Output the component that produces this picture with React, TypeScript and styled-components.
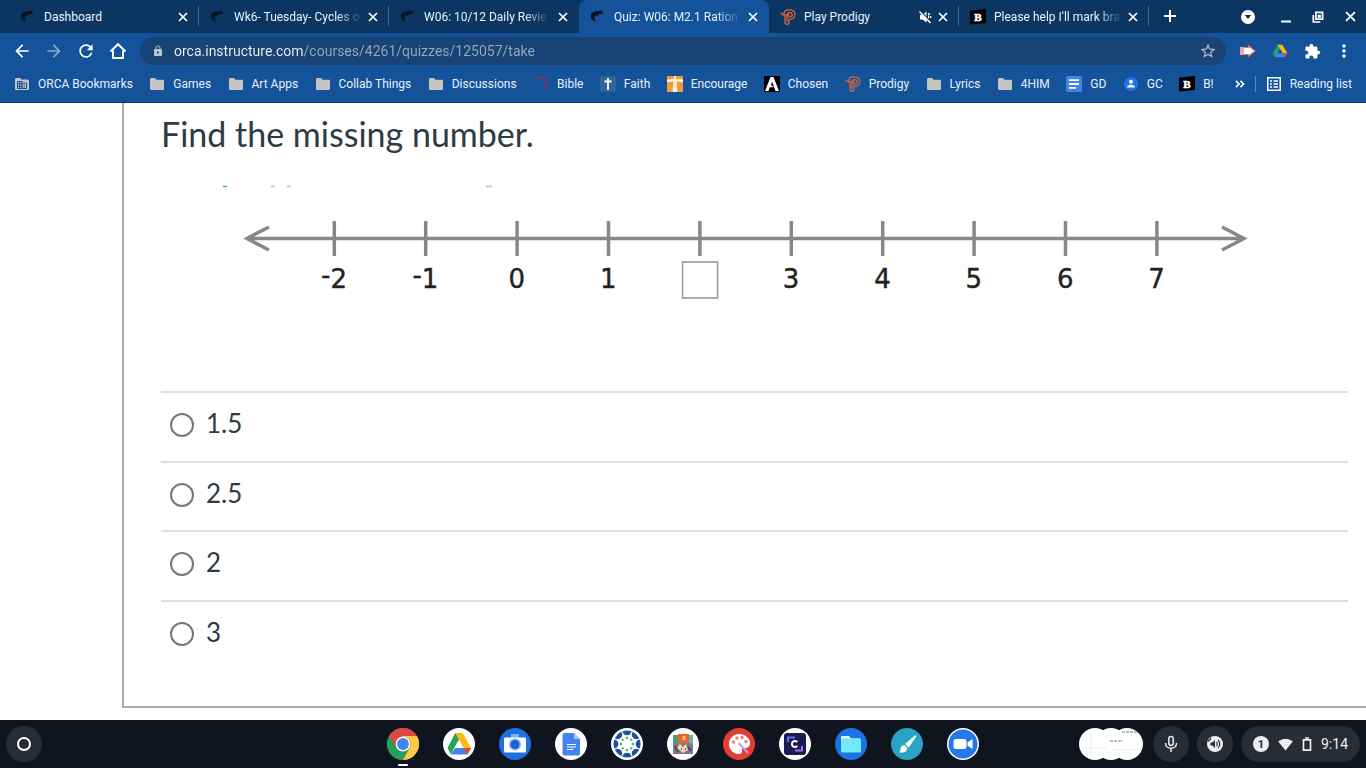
import React from "react";
import styled, { createGlobalStyle } from "styled-components";
import {
  MdArrowBack,
  MdArrowForward,
  MdRefresh,
  MdLock,
  MdStarBorder,
  MdExtension,
  MdMoreVert,
  MdSignalWifi4Bar,
} from "react-icons/md";

const color = {
  strip: "#0b3661",
  chrome: "#14539a",
  field: "#194374",
  light: "#e9f1fa",
  shelf: "#10141e",
  shelfItem: "#292c36",
  ink: "#2d3b45",
};

const GlobalStyle = createGlobalStyle`
  * { box-sizing: border-box; }
  body { margin: 0; background: #fff; font-family: Roboto, "Liberation Sans", sans-serif; }
  button { font: inherit; color: inherit; background: none; border: 0; padding: 0; cursor: pointer; }
  svg { display: block; flex: none; }
`;

const Screen = styled.div`
  display: flex;
  flex-direction: column;
  min-height: 100vh;
`;

/* ---------- browser window ---------- */

const TabStrip = styled.header`
  display: flex;
  align-items: stretch;
  height: 33px;
  padding: 0 0 0 9px;
  background: ${color.strip};
  color: ${color.light};
`;

const Tab = styled.div<{ $active?: boolean; $divider?: boolean }>`
  position: relative;
  display: flex;
  align-items: center;
  flex: 0 1 190px;
  min-width: 0;
  padding: 0 7px 0 11px;
  background: ${(p) => (p.$active ? color.chrome : "transparent")};
  border-radius: 8px 8px 0 0;
  &::after {
    content: "";
    position: absolute;
    right: 0;
    top: 6px;
    height: 20px;
    width: 1px;
    background: ${(p) => (p.$divider ? "#45688d" : "transparent")};
  }
`;

const TabTitle = styled.button`
  display: flex;
  align-items: center;
  gap: 8px;
  flex: 1;
  min-width: 0;
  font-size: 12px;
  line-height: 16px;
  text-align: left;
`;

const TabText = styled.span<{ $fade?: boolean }>`
  overflow: hidden;
  white-space: nowrap;
  mask-image: ${(p) => (p.$fade ? "linear-gradient(to right, #000 82%, rgba(0, 0, 0, 0.1))" : "none")};
`;

const TabButton = styled.button`
  display: flex;
  align-items: center;
  justify-content: center;
  width: 18px;
  height: 18px;
`;

const WindowControls = styled.div`
  display: flex;
  align-items: center;
  margin-left: auto;
`;

const IconButton = styled.button<{ $dim?: boolean }>`
  display: flex;
  align-items: center;
  justify-content: center;
  width: 32px;
  height: 28px;
  flex: none;
  opacity: ${(p) => (p.$dim ? 0.5 : 1)};
`;

const WindowButton = styled(IconButton)<{ $wide?: boolean }>`
  width: ${(p) => (p.$wide ? "44px" : "32px")};
`;

const NewTab = styled(IconButton)`
  width: 42px;
  height: 32px;
`;

const Toolbar = styled.nav`
  display: flex;
  align-items: center;
  gap: 6px;
  height: 36px;
  padding: 0 6px;
  background: ${color.chrome};
  color: #fff;
`;

const ButtonGroup = styled.div`
  display: flex;
`;

const AddressBar = styled.div`
  display: flex;
  align-items: center;
  flex: 1;
  height: 28px;
  padding: 0 2px 0 12px;
  gap: 10px;
  border-radius: 14px;
  background: ${color.field};
  color: #b9c3cf;
`;

const Address = styled.input`
  flex: 1;
  min-width: 0;
  padding: 0;
  border: 0;
  outline: 0;
  font: 14px/20px Roboto, "Liberation Sans", sans-serif;
  color: transparent;
  background: linear-gradient(to right, #eef4fa 129px, #93aac6 129px);
  background-clip: text;
  -webkit-background-clip: text;
`;

const Bookmarks = styled.nav`
  display: flex;
  align-items: center;
  gap: 21px;
  height: 34px;
  padding: 0 14px 3px;
  border-bottom: 1px solid #0c3866;
  background: ${color.chrome};
  color: ${color.light};
`;

const BookmarkList = styled.div`
  display: flex;
  justify-content: space-between;
  flex: 1;
  min-width: 0;
`;

const Bookmark = styled.a`
  display: flex;
  align-items: center;
  gap: 8px;
  flex: none;
  font-size: 12px;
  line-height: 16px;
  color: inherit;
  text-decoration: none;
  white-space: nowrap;
`;

const BookmarksEnd = styled.div`
  display: flex;
  align-items: center;
  gap: 10px;
`;

const Divider = styled.span`
  width: 1px;
  height: 16px;
  background: #5c88ba;
`;

const More = styled.button`
  display: flex;
  padding: 4px 0;
`;

/* ---------- quiz ---------- */

const Page = styled.main`
  flex: 1;
  overflow: hidden;
  padding: 0 0 12px 122px;
`;

const Question = styled.form`
  padding: 7px 18px 37px 37px;
  border-left: 2px solid #aaa;
  border-bottom: 2px solid #aaa;
  font-family: Lato, "Liberation Sans", sans-serif;
  color: ${color.ink};
`;

const Prompt = styled.h1`
  margin: 0 0 26px;
  font-size: 34px;
  line-height: 48px;
  font-weight: 400;
`;

const Figure = styled.figure`
  margin: 0 0 77px;
  svg {
    width: 100%;
    height: auto;
  }
`;

const Answers = styled.fieldset`
  display: flex;
  flex-direction: column;
  height: 278px;
  margin: 0;
  padding: 0;
  border: 0;
`;

const Answer = styled.label`
  display: flex;
  align-items: flex-start;
  flex: 1;
  gap: 12px;
  padding: 14px 0 0 9px;
  border-top: 2px solid #dedede;
  font-size: 26px;
  line-height: 32px;
`;

const Radio = styled.input`
  appearance: none;
  width: 24px;
  height: 24px;
  margin: 6px 0 0;
  border: 2px solid #777;
  border-radius: 50%;
  background: #fff;
  &:checked {
    border-width: 7px;
  }
`;

/* ---------- shelf ---------- */

const Shelf = styled.footer`
  display: grid;
  grid-template-columns: 1fr auto 1fr;
  align-items: center;
  height: 48px;
  padding: 0 6px;
  background: ${color.shelf};
  color: #eceef1;
`;

const RoundButton = styled.button`
  display: flex;
  align-items: center;
  justify-content: center;
  width: 36px;
  height: 36px;
  border-radius: 50%;
  background: ${color.shelfItem};
`;

const Apps = styled.div`
  display: flex;
  gap: 24px;
`;

const AppButton = styled.button<{ $running?: boolean }>`
  position: relative;
  width: 32px;
  height: 32px;
  &::after {
    content: "";
    position: absolute;
    left: 11px;
    bottom: -6px;
    width: 10px;
    height: 2px;
    border-radius: 1px;
    background: ${(p) => (p.$running ? "#fff" : "transparent")};
  }
`;

const StatusArea = styled.div`
  display: flex;
  align-items: center;
  justify-content: flex-end;
  gap: 8px;
`;

const Status = styled.button`
  display: flex;
  align-items: center;
  gap: 9px;
  height: 36px;
  padding: 0 12px;
  border-radius: 18px;
  background: ${color.shelfItem};
  font-size: 14px;
  line-height: 20px;
`;

/* ---------- icons ---------- */

const Close = ({ size = 10 }: { size?: number }) => (
  <svg width={size} height={size} viewBox="0 0 10 10">
    <path d="M1 1l8 8M9 1 1 9" stroke="#fff" strokeWidth="1.700" />
  </svg>
);

const Plus = () => (
  <svg width="12" height="12" viewBox="0 0 12 12">
    <path d="M6 0v12M0 6h12" stroke="#fff" strokeWidth="2" />
  </svg>
);

const Orca = () => (
  <svg width="16" height="16" viewBox="0 0 16 16">
    <path d="M1 6.500C1 3.500 4 2.500 6.500 2.200L12.500 1.500 12 3l1.500 2-4-.3L7.500 7 6 6l-1.500 2.500 1 4.500-3-2C1 10 .8 8.500 1 6.500z" fill="#071420" />
  </svg>
);

const ProdigyIcon = () => (
  <svg width="16" height="16" viewBox="0 0 16 16" fill="none" stroke="#d9663f" strokeWidth="1.300" strokeLinecap="round">
    <path d="M.8 4C2 6 4 6.500 7 6.200M4 5.500C3.500 2 6 .8 9 .8c4 0 6 2 6 4.700s-2.300 4.800-5.500 4.800H9v3.200c0 2.400-4 2.400-4 0V6.500" />
    <path d="M7 12.500V6c0-3.200 5.300-3 5.300-.3 0 2-1.700 2.300-3.500 2.100V5.500" />
  </svg>
);

const Brainly = () => (
  <svg width="16" height="16" viewBox="0 0 16 16">
    <path d="M0 1.500 16 0v14L0 15.500z" fill="#000" />
    <text x="8" y="11.500" textAnchor="middle" fontFamily="Liberation Serif, serif" fontWeight="700" fontSize="11" fill="#fff" stroke="#fff" strokeWidth=".6">B</text>
  </svg>
);

const Muted = () => (
  <svg width="14" height="14" viewBox="0 0 14 14">
    <path d="M2 5h2.500L8.500 1.500v11L4.500 9.500H2zM10 4.500c1.500 1.500 1.500 4 0 5.500z" fill="#fff" />
    <path d="M2.500 1 13.500 12.500" stroke={color.strip} strokeWidth="1.500" />
    <path d="M1.500 1.500 12.500 13M11 3v2M12.500 6v2" stroke="#fff" strokeWidth="1.500" />
  </svg>
);

const TabMenu = () => (
  <svg width="14" height="14" viewBox="0 0 14 14">
    <circle cx="7" cy="7" r="7" fill="#fff" />
    <path d="M3.800 5h6.400L7 9z" fill="#222" />
  </svg>
);

const Minimise = () => (
  <svg width="12" height="12" viewBox="0 0 12 12">
    <path d="M1 10.500h10" stroke="#fff" strokeWidth="2" />
  </svg>
);

const Restore = () => (
  <svg width="12" height="12" viewBox="0 0 12 12" fill="none" stroke="#fff" strokeWidth="1.700">
    <path d="M3.900 1.400h6.700v6.700H3.900zM1.300 4v7h7M6.500 6V4.500H8V6z" />
  </svg>
);

const Home = () => (
  <svg width="18" height="18" viewBox="0 0 18 18" fill="none" stroke="#fff" strokeWidth="2">
    <path d="M1.500 9.500 9 2.200l7.500 7.300M4 8.500V16h10V8.500" />
  </svg>
);

const Screencast = () => (
  <svg width="18" height="16" viewBox="0 0 18 16">
    <path d="M1 4h8V1.500L17 8l-8 6.500V12H1z" fill="#f0696d" />
    <path d="M5 5h5V4l5 4-5 4v-1H5z" fill="#fff" />
    <path d="M1 4h4v8H1z" fill="#f5a3a6" />
  </svg>
);

const Drive = () => (
  <svg width="16" height="16" viewBox="0 0 24 24">
    <path d="M8.500 2.500h7L9 14l-4.500 7.500L1 15.500z" fill="#1ea362" />
    <path d="M8.500 2.500h7L23 15.500h-7z" fill="#fbbc04" />
    <path d="M8 15.500h15l-3.500 6h-15z" fill="#4285f4" />
    <path d="M16 15.500h7l-3.500 6z" fill="#ea4335" />
    <path d="M12 9.500 8.800 15.200h6.400z" fill={color.chrome} />
  </svg>
);

const ManagedFolder = () => (
  <svg width="16" height="16" viewBox="0 0 16 16">
    <path d="M1 3.500C1 2.500 1.500 2 2.500 2H6l1.500 1.500h6c1 0 1.500.5 1.500 1.500v7.500c0 1-.5 1.500-1.500 1.500h-11c-1 0-1.500-.5-1.500-1.500z" fill="#c4c4c4" />
    <path d="M3.500 5.500H8v7H3.500zM8 7h4.500v5.500H8zM3.500 7.800H8M3.500 10.200H8M5.700 5.500v7M9.500 9H11M9.500 11H11" fill="none" stroke={color.chrome} />
  </svg>
);

const Folder = () => (
  <svg width="16" height="16" viewBox="0 0 16 16">
    <path d="M1 3.500C1 2.500 1.500 2 2.500 2H6l1.500 1.800h6c1 0 1.500.4 1.500 1.400v7.300c0 1-.5 1.500-1.500 1.500h-11c-1 0-1.500-.5-1.500-1.500z" fill="#c6c4c2" />
  </svg>
);

const BibleIcon = () => (
  <svg width="16" height="16" viewBox="0 0 16 16" fill="none">
    <path d="M2 3c3-2.500 11-2.500 11.500 3.500 0 3-.5 5-2 7.500" stroke="#8a2f55" strokeWidth="1.600" />
  </svg>
);

const FaithIcon = () => (
  <svg width="16" height="16" viewBox="0 0 16 16">
    <path d="M0 0h16v16H0z" fill="#2f6595" />
    <path d="M8 2v12M4.500 5.500h7" stroke="#fff" strokeWidth="1.800" />
  </svg>
);

const EncourageIcon = () => (
  <svg width="16" height="16" viewBox="0 0 16 16">
    <path d="M0 0h16v16H0z" fill="#ee9a3d" />
    <path d="M7 0h2v3l7 .5V6L9.500 5.500 10.500 16h-5L6.500 5.500 0 6V3.500L7 3z" fill="#fff3df" />
  </svg>
);

const ChosenIcon = () => (
  <svg width="16" height="16" viewBox="0 0 16 16">
    <path d="M0 0h16v16H0z" fill="#000" />
    <path d="M6.500 1h3L15 15h-3.500L8 5.500 7 9l2.500 2-4 .5L4.500 15H1z" fill="#fff" />
  </svg>
);

const DocsIcon = () => (
  <svg width="16" height="16" viewBox="0 0 16 16">
    <rect width="16" height="16" rx="1.500" fill="#4583ec" />
    <path d="M3 4.200h10M3 8h10M3 11.800h7" stroke="#fff" strokeWidth="1.800" />
  </svg>
);

const ContactsIcon = () => (
  <svg width="16" height="16" viewBox="0 0 16 16">
    <circle cx="8" cy="8" r="7" fill="#1f75e8" />
    <circle cx="8" cy="5.800" r="2" fill="#fff" />
    <path d="M4 11.500c0-3.600 8-3.600 8 0z" fill="#fff" />
  </svg>
);

const Chevrons = () => (
  <svg width="10" height="8" viewBox="0 0 10 8" fill="none" stroke="#fff" strokeWidth="1.700">
    <path d="M1 .8 4 4 1 7.200M5.500.8l3 3.200-3 3.200" />
  </svg>
);

const ReadingIcon = () => (
  <svg width="16" height="16" viewBox="0 0 16 16" fill="none" stroke="#fff" strokeWidth="1.500">
    <path d="M1.800 1.800h12.400v12.400H1.800zM4 5h2M7.500 5H12M4 8h2M7.500 8H12M4 11h2M7.500 11H12" />
  </svg>
);

const disc = (fill: string, children: React.ReactNode) => (
  <svg width="32" height="32" viewBox="0 0 32 32">
    <circle cx="16" cy="16" r="16" fill={fill} />
    {children}
  </svg>
);

const spokes = [0, 45, 90, 135, 180, 225, 270, 315];

const apps: { name: string; running?: boolean; icon: React.ReactNode }[] = [
  {
    name: "Chrome",
    running: true,
    icon: disc(
      "#dc4a3d",
      <>
        <path d="M2.140 8A16 16 0 0 0 16 32L22.500 20 16 16 9.500 20z" fill="#1fa05c" />
        <path d="M29.860 8A16 16 0 0 1 16 32L22.500 20A7.500 7.500 0 0 0 16 8.500V8z" fill="#fbcb45" />
        <path d="M2.140 8A16 16 0 0 1 29.860 8H16l-6.500 12z" fill="#dc4a3d" />
        <circle cx="16" cy="16" r="7.400" fill="#fff" />
        <circle cx="16" cy="16" r="5.900" fill="#4484ee" />
      </>
    ),
  },
  {
    name: "Drive",
    icon: disc(
      "#fff",
      <>
        <path d="M12.300 5h7.400l-7.300 12.800L8 26.500 4.500 20z" fill="#28a35a" />
        <path d="M12.300 5h7.400l8.300 15h-7.500z" fill="#fbbc12" />
        <path d="M12 20h16l-3.500 6.500H8z" fill="#4483ee" />
        <path d="M20.500 20H28l-3.500 6.500z" fill="#e6463a" />
        <path d="M16 12.200 11.600 20h8.800z" fill="#fff" />
      </>
    ),
  },
  {
    name: "Camera",
    icon: disc(
      "#1f70e2",
      <>
        <path d="M12 6h8v4h-8z" fill="#7fb2f6" />
        <rect x="5" y="9.500" width="22" height="15" rx="1" fill="#fff" />
        <circle cx="16" cy="16.500" r="6" fill="#8ab8f7" />
        <circle cx="16" cy="16.500" r="4.500" fill="#1b62cd" />
      </>
    ),
  },
  {
    name: "Docs",
    icon: disc(
      "#fff",
      <>
        <path d="M9.500 5H19l6 6v14.500a2 2 0 0 1-2 2H9.500a2 2 0 0 1-2-2V7a2 2 0 0 1 2-2z" fill="#4684ed" />
        <path d="M19 5l6 6h-6z" fill="#a6c6f8" />
        <path d="M12 16.500h9M12 19h9M12 21.500h6" stroke="#fff" strokeWidth="1.200" />
      </>
    ),
  },
  {
    name: "Canvas",
    icon: disc(
      "#fff",
      <>
        {spokes.map((a) => (
          <g key={a} transform={`rotate(${a} 16 16)`}>
            <path d="M11.500 3.200a13.500 13.500 0 0 1 9 0c-.5 5.500-8.500 5.500-9 0z" fill="#20509c" />
            <circle cx="16" cy="10" r="1.200" fill="#55a08a" />
          </g>
        ))}
      </>
    ),
  },
  {
    name: "Game",
    icon: disc(
      "#fff",
      <>
        <path d="M6 7h20v19H6z" fill="#4b9c76" />
        <path d="M6 15l6 2 14-4v7l-5 6H8z" fill="#8b6a9c" />
        <path d="M21 7h5v10l-5-3z" fill="#62bcae" />
        <path d="M11 6h11v9H11z" fill="#ec6427" />
        <path d="M15.500 8h3v4h-3z" fill="#f6b48f" />
        <path d="M10 20l3-4 3 3 3-3 2 6-5 3z" fill="#f1d7b2" />
        <path d="M8 18l3 6M21 19l3 4M14 21h1M18 21h1" stroke="#47383e" strokeWidth="1.500" />
      </>
    ),
  },
  {
    name: "Canvas paint",
    icon: disc(
      "#e33e35",
      <>
        <path d="M16 6c6 0 11 4 11 9 0 4-3 5.500-6 5-2-.3-2.500 1-2 2.500.6 1.800-.8 3.500-3 3.500-6 0-10-4.500-10-10S10.500 6 16 6z" fill="#fff" />
        <g fill="#e6867f">
          <circle cx="10.500" cy="14" r="1.700" />
          <circle cx="14" cy="10" r="1.700" />
          <circle cx="19" cy="9.500" r="1.700" />
          <circle cx="23" cy="13.500" r="1.700" />
        </g>
        <path d="M15.500 15 25 25" stroke="#c9a5d9" strokeWidth="2" />
      </>
    ),
  },
  {
    name: "Clever",
    icon: disc(
      "#fff",
      <>
        <rect x="5" y="5" width="22" height="22" rx="3" fill="#1b1c4f" />
        <path d="M9 14V9.500h7" fill="none" stroke="#4d7bf3" strokeWidth="2" />
        <path d="M23 18v4.500h-7" fill="none" stroke="#a873e8" strokeWidth="2" />
        <path d="M18.300 14.200a3 3 0 1 0 0 3.700" fill="none" stroke="#fff" strokeWidth="2" />
      </>
    ),
  },
  {
    name: "Files",
    icon: disc(
      "#1f74e5",
      <>
        <path d="M6 9.500C6 8.500 6.500 8 7.500 8H14l2 2.500h9v4H6z" fill="#dffbff" />
        <rect x="6" y="10.500" width="20" height="14" rx="1.500" fill="#73eaf8" />
      </>
    ),
  },
  {
    name: "Sketch",
    icon: disc(
      "#2ba3c4",
      <>
        <path d="M24.500 8 15 16l2.500 2.500z" fill="#fff" stroke="#fff" strokeWidth="1.500" strokeLinejoin="round" />
        <path d="M13.500 17.300l2.700 2.700c.5 3-3 5.500-8.500 4.300 2-.8 1.600-2 2-4 .3-2 2-3.200 3.800-3z" fill="#fff" />
      </>
    ),
  },
  {
    name: "Zoom",
    icon: disc(
      "#fff",
      <>
        <circle cx="16" cy="16" r="14.500" fill="#2579e8" />
        <rect x="6.500" y="11" width="13" height="10" rx="2.500" fill="#fff" />
        <path d="M20.500 14.500 25.500 11v10l-5-3.500z" fill="#fff" />
      </>
    ),
  },
];

const NumberLine = () => {
  const labels = ["-2", "-1", "0", "1", null, "3", "4", "5", "6", "7"];
  return (
    <svg viewBox="0 0 1187 130" role="img" aria-label="Number line from -2 to 7">
      <g fill="none" stroke="#888" strokeWidth="3.500">
        <path d="M86 54.500h997M108 43 86 54.500 108 66M1061 43l22 11.500L1061 66" />
        {labels.map((_, i) => (
          <path key={i} d={`M${173.300 + i * 91.400} 37v35`} />
        ))}
      </g>
      <g fontFamily="DejaVu Sans, Verdana, sans-serif" fontSize="26" fill="#222" stroke="#222" strokeWidth=".4" textAnchor="middle">
        {labels.map((label, i) => {
          const x = 173 + i * 91.400;
          if (label === null) {
            return <rect key={i} x={x - 17} y="78" width="35" height="36" fill="#fff" stroke="#9a9a9a" strokeWidth="1.600" />;
          }
          return label.startsWith("-") ? (
            <text key={i} x={x} y="104">
              <tspan dy="-4">-</tspan>
              <tspan dy="4">{label.slice(1)}</tspan>
            </text>
          ) : (
            <text key={i} x={x} y="104">{label}</text>
          );
        })}
      </g>
      <path d="M62 2.500h4" stroke="#2cb5b5" strokeWidth="1.500" />
      <path d="M110 2.500h4M126 2.500h4M325 2.500h6" stroke="#bbb" strokeWidth="1.500" />
    </svg>
  );
};

const tabs = [
  { title: "Dashboard", icon: <Orca />, divider: true },
  { title: "Wk6- Tuesday- Cycles o", icon: <Orca />, divider: true, fade: true },
  { title: "W06: 10/12 Daily Revie", icon: <Orca />, fade: true },
  { title: "Quiz: W06: M2.1 Ration", icon: <Orca />, active: true, fade: true },
  { title: "Play Prodigy", icon: <ProdigyIcon />, divider: true, muted: true },
  { title: "Please help I'll mark bra", icon: <Brainly />, divider: true, fade: true },
];

const bookmarks = [
  { title: "ORCA Bookmarks", icon: <ManagedFolder /> },
  { title: "Games", icon: <Folder /> },
  { title: "Art Apps", icon: <Folder /> },
  { title: "Collab Things", icon: <Folder /> },
  { title: "Discussions", icon: <Folder /> },
  { title: "Bible", icon: <BibleIcon /> },
  { title: "Faith", icon: <FaithIcon /> },
  { title: "Encourage", icon: <EncourageIcon /> },
  { title: "Chosen", icon: <ChosenIcon /> },
  { title: "Prodigy", icon: <ProdigyIcon /> },
  { title: "Lyrics", icon: <Folder /> },
  { title: "4HIM", icon: <Folder /> },
  { title: "GD", icon: <DocsIcon /> },
  { title: "GC", icon: <ContactsIcon /> },
  { title: "B!", icon: <Brainly /> },
];

export default function App() {
  return (
    <Screen>
      <GlobalStyle />
      <TabStrip>
        {tabs.map((t) => (
          <Tab key={t.title} $active={t.active} $divider={t.divider}>
            <TabTitle>
              {t.icon}
              <TabText $fade={t.fade}>{t.title}</TabText>
            </TabTitle>
            {t.muted && (
              <TabButton aria-label="Unmute tab">
                <Muted />
              </TabButton>
            )}
            <TabButton aria-label="Close tab">
              <Close />
            </TabButton>
          </Tab>
        ))}
        <NewTab aria-label="New tab">
          <Plus />
        </NewTab>
        <WindowControls>
          <WindowButton $wide aria-label="Search tabs"><TabMenu /></WindowButton>
          <WindowButton aria-label="Minimize"><Minimise /></WindowButton>
          <WindowButton aria-label="Restore"><Restore /></WindowButton>
          <WindowButton aria-label="Close window"><Close size={11} /></WindowButton>
        </WindowControls>
      </TabStrip>

      <Toolbar>
        <ButtonGroup>
          <IconButton aria-label="Back"><MdArrowBack size={20} /></IconButton>
          <IconButton $dim aria-label="Forward"><MdArrowForward size={20} /></IconButton>
          <IconButton aria-label="Reload"><MdRefresh size={20} /></IconButton>
          <IconButton aria-label="Home"><Home /></IconButton>
        </ButtonGroup>
        <AddressBar>
          <MdLock size={12} />
          <Address aria-label="Address" defaultValue="orca.instructure.com/courses/4261/quizzes/125057/take" />
          <IconButton aria-label="Bookmark this page"><MdStarBorder size={18} /></IconButton>
        </AddressBar>
        <ButtonGroup>
          <IconButton aria-label="Screencast"><Screencast /></IconButton>
          <IconButton aria-label="Drive"><Drive /></IconButton>
          <IconButton aria-label="Extensions"><MdExtension size={17} /></IconButton>
          <IconButton aria-label="Menu"><MdMoreVert size={20} /></IconButton>
        </ButtonGroup>
      </Toolbar>

      <Bookmarks>
        <BookmarkList>
          {bookmarks.map((b) => (
            <Bookmark key={b.title} href="#">
              {b.icon}
              {b.title}
            </Bookmark>
          ))}
        </BookmarkList>
        <BookmarksEnd>
          <More aria-label="More bookmarks"><Chevrons /></More>
          <Divider />
          <Bookmark href="#">
            <ReadingIcon />
            Reading list
          </Bookmark>
        </BookmarksEnd>
      </Bookmarks>

      <Page>
        <Question>
          <Prompt>Find the missing number.</Prompt>
          <Figure>
            <NumberLine />
          </Figure>
          <Answers aria-label="Answers">
            {["1.5", "2.5", "2", "3"].map((a) => (
              <Answer key={a}>
                <Radio type="radio" name="answer" value={a} />
                {a}
              </Answer>
            ))}
          </Answers>
        </Question>
      </Page>

      <Shelf>
        <RoundButton aria-label="Launcher">
          <svg width="14" height="14" viewBox="0 0 14 14">
            <circle cx="7" cy="7" r="6" fill="none" stroke="#fff" strokeWidth="2" />
          </svg>
        </RoundButton>
        <Apps>
          {apps.map((a) => (
            <AppButton key={a.name} aria-label={a.name} $running={a.running}>
              {a.icon}
            </AppButton>
          ))}
        </Apps>
        <StatusArea>
          <button aria-label="Recent captures">
            <svg width="66" height="32" viewBox="0 0 66 32">
              <circle cx="16" cy="16" r="16" fill="#fff" />
              <circle cx="32" cy="16" r="16" fill="#fff" />
              <circle cx="48" cy="16" r="16" fill="#fff" />
              <path d="M31 13h13M43 4h15" stroke="#777" strokeWidth="1" strokeDasharray="3 1" />
              <path d="M4 20h24M34 22h28M12 4v22" stroke="#eee" />
            </svg>
          </button>
          <RoundButton aria-label="Dictation">
            <svg width="14" height="18" viewBox="0 0 14 18" fill="none" stroke="#eceef1" strokeWidth="1.500">
              <rect x="4.800" y="1.500" width="4.400" height="9" rx="2.200" />
              <path d="M1.500 8c0 7 11 7 11 0M7 13.500V17" />
            </svg>
          </RoundButton>
          <RoundButton aria-label="Select to speak">
            <svg width="16" height="16" viewBox="0 0 16 16">
              <circle cx="8" cy="8" r="8" fill="#eceef1" />
              <path d="M3.500 6.500h2L8 4v8L5.500 9.500h-2z" fill={color.shelfItem} />
              <path d="M9.500 6c1 1 1 3 0 4M11 4c2.300 2 2.300 6 0 8M1 5.500l3-3" fill="none" stroke={color.shelfItem} strokeWidth="1.200" />
            </svg>
          </RoundButton>
          <Status>
            <svg width="16" height="16" viewBox="0 0 16 16">
              <circle cx="8" cy="8" r="8" fill="#eceef1" />
              <text x="8" y="12" textAnchor="middle" fontSize="11" fontWeight="700" fill={color.shelfItem}>1</text>
            </svg>
            <MdSignalWifi4Bar size={15} />
            <svg width="10" height="14" viewBox="0 0 10 14">
              <path d="M1.500 2.800h7v10.400h-7zM3 1h4" fill="none" stroke="#eceef1" strokeWidth="1.700" />
            </svg>
            9:14
          </Status>
        </StatusArea>
      </Shelf>
    </Screen>
  );
}
